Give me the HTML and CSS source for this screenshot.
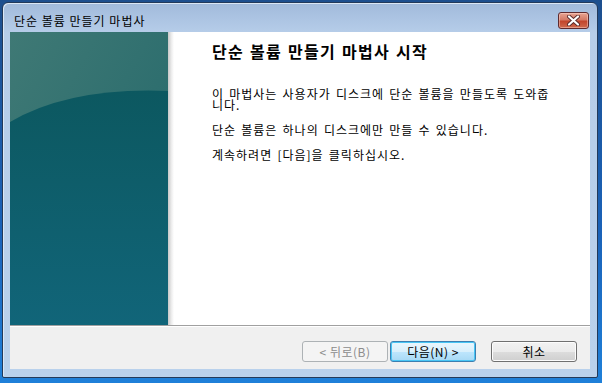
FILE: index.html
```html
<!DOCTYPE html>
<html>
<head>
    <meta charset="utf-8">
    <title>단순 볼륨 만들기 마법사</title>
    <link rel="stylesheet" href="styles.css">
</head>
<body>
    <div class="window">
        <div class="titlebar">
            <span class="title">단순 볼륨 만들기 마법사</span>
            <div class="close">
                <svg width="15" height="11" viewBox="0 0 15 11">
                    <path d="M3 1.5 L12 9.5 M12 1.5 L3 9.5" stroke="#5a2a2a" stroke-width="4" stroke-linecap="round"/>
                    <path d="M3 1.5 L12 9.5 M12 1.5 L3 9.5" stroke="#ffffff" stroke-width="2.2" stroke-linecap="round"/>
                </svg>
            </div>
        </div>

        <div class="client">
            <div class="content">
                <!-- Wizard side picture -->
                <div class="side">
                    <svg width="158" height="293" viewBox="0 0 158 293">
                        <defs>
                            <linearGradient id="top" x1="0" y1="0" x2="1" y2="1">
                                <stop offset="0" stop-color="#3f7975"/>
                                <stop offset="1" stop-color="#22676a"/>
                            </linearGradient>
                            <linearGradient id="low" x1="0" y1="0" x2="0" y2="1">
                                <stop offset="0" stop-color="#0c5860"/>
                                <stop offset="1" stop-color="#116579"/>
                            </linearGradient>
                        </defs>
                        <rect width="158" height="293" fill="url(#top)"/>
                        <path d="M0 90 Q60 55 158 59 L158 293 L0 293 Z" fill="url(#low)"/>
                    </svg>
                    <div class="side-shadow"></div>
                </div>
                <div class="text">
                    <h1>단순 볼륨 만들기 마법사 시작</h1>
                    <p>이 마법사는 사용자가 디스크에 단순 볼륨을 만들도록 도와줍니다.</p>
                    <p>단순 볼륨은 하나의 디스크에만 만들 수 있습니다.</p>
                    <p>계속하려면 [다음]을 클릭하십시오.</p>
                </div>
            </div>
            <div class="buttons">
                <button class="btn" disabled>&lt; 뒤로(B)</button>
                <button class="btn default">다음(N) &gt;</button>
                <button class="btn cancel">취소</button>
            </div>
        </div>
    </div>
</body>
</html>
```

FILE: styles.css
```css
body {
    margin: 0;
    padding: 2px 0 0 2px;
    height: 383px;
    box-sizing: border-box;
    overflow: hidden;
    background: linear-gradient(180deg, #1d4f8e 0%, #1a62b8 60%, #1f80d9 100%);
    font-family: "Noto Sans CJK KR", "Noto Sans", sans-serif;
    font-size: 12px;
    color: #000;
}

.window {
    width: 596px;
    height: 376px;
    box-sizing: border-box;
    border: 1px solid #233a5a;
    border-radius: 6px 6px 2px 2px;
    background: linear-gradient(180deg, #a1badb 0%, #b6cde9 8%, #b9d1ec 100%);
    box-shadow: inset 1px 1px 0 #dbe7f4;
    display: flex;
    flex-direction: column;
}

.titlebar {
    height: 29px;
    display: flex;
    align-items: flex-start;
    justify-content: space-between;
    padding: 0 8px 0 11px;
}

.title {
    margin-top: 11px;
    line-height: 14px;
    letter-spacing: 1px;
    color: #000;
}

.close {
    margin-top: 9px;
    width: 31px;
    height: 17px;
    box-sizing: border-box;
    border: 1px solid #5e2a2e;
    border-radius: 3px;
    background: linear-gradient(180deg, #e8a493 0%, #d47a66 45%, #c2452c 55%, #cf6a4e 100%);
    box-shadow: inset 0 0 0 1px rgba(255, 220, 210, 0.45);
    display: flex;
    align-items: center;
    justify-content: center;
}

.client {
    margin: 0 7px 0 7px;
    height: 337px;
    display: flex;
    flex-direction: column;
}

.content {
    height: 293px;
    display: flex;
    background: #ffffff;
    border-bottom: 1px solid #a0a0a0;
}

.side {
    display: flex;
}

.side svg {
    display: block;
}

.side-shadow {
    width: 6px;
    background: linear-gradient(90deg, #c8c8c8, #eeeeee 60%, #ffffff);
}

.text {
    padding: 9px 0 0 38px;
    width: 345px;
}

h1 {
    margin: 0;
    font-size: 16px;
    line-height: 20px;
    font-weight: bold;
    letter-spacing: 1.3px;
    word-spacing: 1px;
}

p {
    margin: 0 0 14px 0;
    line-height: 11px;
    letter-spacing: 1px;
    word-spacing: 1.5px;
}

h1 + p {
    margin-top: 27px;
}

.buttons {
    flex: 1;
    background: #f0f0f0;
    border-top: 1px solid #ffffff;
    display: flex;
    align-items: flex-start;
    padding: 14px 0 0 292px;
}

.btn {
    width: 86px;
    height: 21px;
    padding: 0;
    margin-right: 2px;
    font-family: "Noto Sans CJK KR", "Noto Sans", sans-serif;
    font-size: 12px;
    line-height: 14px;
    letter-spacing: 0.5px;
    color: #000;
    border: 1px solid #707070;
    border-radius: 3px;
    background: linear-gradient(180deg, #f2f2f2 0%, #ebebeb 50%, #dddddd 51%, #cfcfcf 100%);
    box-shadow: inset 0 0 0 1px #fcfcfc;
}

.btn:disabled {
    color: #8c8c8c;
    border-color: #adb2b5;
    background: #f4f4f4;
    box-shadow: none;
}

.btn.default {
    border-color: #3c7fb1;
    background: linear-gradient(180deg, #eaf6fd 0%, #d9f0fc 50%, #bee6fd 51%, #a7d9f5 100%);
    box-shadow: inset 0 0 0 1px #48c6f5;
}

.btn.cancel {
    margin-left: 13px;
}
```
